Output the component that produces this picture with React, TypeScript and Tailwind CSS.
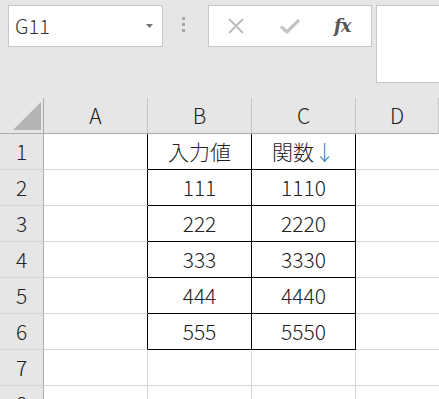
import React from 'react'

const cols = ['A', 'B', 'C', 'D']

// row data: [B, C]
const rows: [string, string][] = [
  ['入力値', '関数'],
  ['111', '1110'],
  ['222', '2220'],
  ['333', '3330'],
  ['444', '4440'],
  ['555', '5550'],
  ['', ''],
  ['', ''],
]

function CornerCell() {
  return (
    <div className="bg-[#e6e6e6] border-r border-b border-[#ababab] flex items-end justify-end pr-[2px] pb-[3px]">
      <svg width="28" height="28" viewBox="0 0 28 28">
        <polygon points="28,0 28,28 0,28" fill="#b4b4b4" />
      </svg>
    </div>
  )
}

export default function App() {
  return (
    <div className="w-[439px] h-[399px] overflow-hidden bg-[#e6e6e6] font-['Noto_Sans_CJK_JP','Noto_Sans',sans-serif] font-light text-[#222]">
      {/* toolbar: name box + formula bar */}
      <div className="h-[98px] flex items-start pt-[5px] pl-[8px]">
        <div className="w-[155px] h-[42px] shrink-0 bg-white border border-[#c6c6c6] flex items-center pl-[6px] pr-[9px]">
          <span className="text-[20px] leading-none text-[#333] flex-1">G11</span>
          <svg width="7" height="4" viewBox="0 0 7 4">
            <polygon points="0,0 7,0 3.5,4" fill="#777" />
          </svg>
        </div>

        <div className="w-[4px] ml-[19px] mr-[22px] mt-[12px] flex flex-col gap-[3px] shrink-0">
          <div className="w-[3px] h-[3px] bg-[#a6a6a6]" />
          <div className="w-[3px] h-[3px] bg-[#a6a6a6]" />
          <div className="w-[3px] h-[3px] bg-[#a6a6a6]" />
        </div>

        <div className="w-[164px] h-[42px] shrink-0 bg-white border border-[#c6c6c6] flex items-center pl-[19px]">
          <svg width="16" height="16" viewBox="0 0 16 16" className="shrink-0">
            <path d="M1 1 L15 15 M15 1 L1 15" stroke="#bdbdbd" strokeWidth="2" fill="none" />
          </svg>
          <svg width="20" height="16" viewBox="0 0 20 16" className="ml-[36px] shrink-0">
            <path d="M1 8.5 L7 14 L19 2" stroke="#c4c4c4" strokeWidth="3.2" fill="none" strokeLinejoin="miter" />
          </svg>
          <span className="ml-[34px] font-['DejaVu_Serif','Liberation_Serif',serif] italic font-bold text-[18px] leading-none text-[#555] tracking-[-1px]">
            fx
          </span>
        </div>

        <div className="ml-[4px] w-[100px] h-[78px] shrink-0 bg-white border border-[#c6c6c6]" />
      </div>

      {/* sheet grid */}
      <div className="grid grid-cols-[44px_104px_104px_104px_1fr] grid-rows-[36px_36px_36px_36px_36px_36px_36px_36px_36px]">
        <CornerCell />
        {cols.map((c) => (
          <div
            key={c}
            className="bg-[#e6e6e6] border-b border-r border-b-[#ababab] border-r-[#c6c6c6] flex items-center justify-center text-[21px] leading-none"
          >
            {c}
          </div>
        ))}

        {rows.map(([b, c], i) => {
          const inTable = i < 6
          return (
            <React.Fragment key={i}>
              <div className="bg-[#e6e6e6] border-r border-b border-r-[#ababab] border-b-[#d4d4d4] flex items-center justify-center text-[21px] leading-none">
                {i + 1}
              </div>
              <div
                className={
                  inTable
                    ? 'bg-white border-r border-b border-r-black border-b-[#d4d4d4]'
                    : 'bg-white border-r border-b border-[#d4d4d4]'
                }
              />
              <div
                className={
                  inTable
                    ? 'bg-white border-r border-b border-black flex items-center justify-center text-[21px] leading-none'
                    : 'bg-white border-r border-b border-[#d4d4d4]'
                }
              >
                {b}
              </div>
              <div
                className={
                  inTable
                    ? 'bg-white border-r border-b border-black flex items-center justify-center text-[21px] leading-none'
                    : 'bg-white border-r border-b border-[#d4d4d4]'
                }
              >
                {c}
                {i === 0 && <span className="text-[#3a7cc0]">↓</span>}
              </div>
              <div className="bg-white border-b border-[#d4d4d4]" />
            </React.Fragment>
          )
        })}
      </div>
    </div>
  )
}
